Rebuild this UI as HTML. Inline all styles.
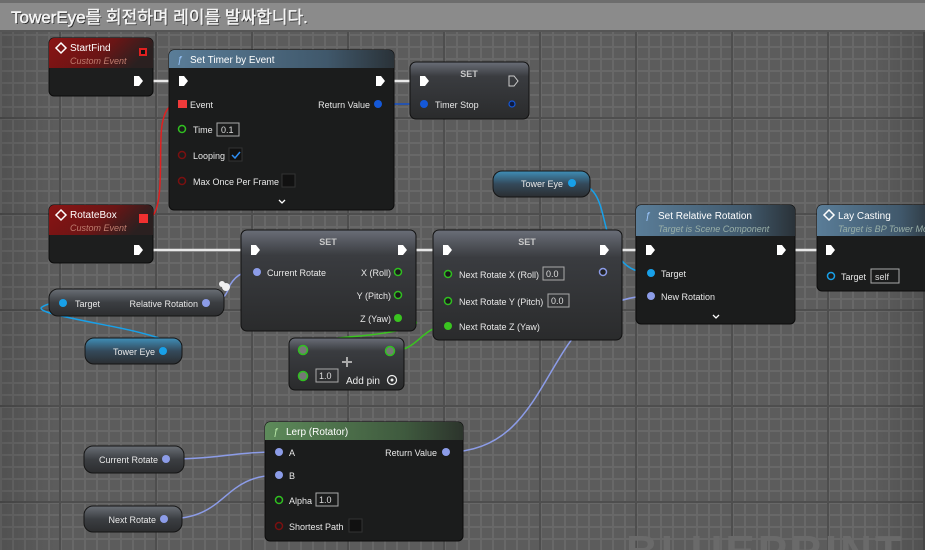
<!DOCTYPE html>
<html><head><meta charset="utf-8"><style>
html,body{margin:0;padding:0;width:925px;height:550px;overflow:hidden}
body{background-color:#5c5c5c;
background-image:
linear-gradient(90deg,#4e4e4e 0 2px,transparent 2px),
linear-gradient(0deg,#4e4e4e 0 2px,transparent 2px),
linear-gradient(90deg,#686868 0 2px,transparent 2px),
linear-gradient(0deg,#686868 0 2px,transparent 2px);
background-size:96px 96px,96px 96px,12px 12px,12px 12px;
background-position:59px 0,0 23px,0 0,0 0;
font-family:"Liberation Sans","Noto Sans CJK KR",sans-serif}
svg{position:absolute;left:0;top:0;display:block;overflow:hidden}
text{font-family:"Liberation Sans","Noto Sans CJK KR",sans-serif}
</style></head><body>
<svg width="925" height="550" viewBox="0 0 925 550">
<defs>
<linearGradient id="red" x1="0" y1="0" x2="1" y2="0.3"><stop offset="0" stop-color="#8a1414"/><stop offset=".6" stop-color="#6a1515"/><stop offset="1" stop-color="#2a2020"/></linearGradient>
<linearGradient id="blue" x1="0" y1="0" x2="1" y2="0"><stop offset="0" stop-color="#5a7d98"/><stop offset=".7" stop-color="#40586b"/><stop offset="1" stop-color="#2a3238"/></linearGradient>
<linearGradient id="green" x1="0" y1="0" x2="1" y2="0"><stop offset="0" stop-color="#5d8a5a"/><stop offset=".7" stop-color="#3f5a3e"/><stop offset="1" stop-color="#2c342c"/></linearGradient>
<linearGradient id="setg" x1="0" y1="0" x2="0" y2="1"><stop offset="0" stop-color="#6a6e78"/><stop offset=".25" stop-color="#3a3c40"/><stop offset="1" stop-color="#2a2b2c"/></linearGradient>
<linearGradient id="varg" x1="0" y1="0" x2="0" y2="1"><stop offset="0" stop-color="#6a6f76"/><stop offset=".5" stop-color="#3b3e42"/><stop offset="1" stop-color="#2c2d2f"/></linearGradient>
<linearGradient id="varb" x1="0" y1="0" x2="0" y2="1"><stop offset="0" stop-color="#3f8fb8"/><stop offset=".5" stop-color="#34495a"/><stop offset="1" stop-color="#2b2e31"/></linearGradient>
<linearGradient id="vig" x1="0" y1="0" x2="1" y2="0"><stop offset="0" stop-color="#000" stop-opacity=".12"/><stop offset=".06" stop-color="#000" stop-opacity="0"/><stop offset=".94" stop-color="#000" stop-opacity="0"/><stop offset="1" stop-color="#000" stop-opacity=".12"/></linearGradient>
</defs>
<rect x="0" y="0" width="925" height="550" fill="url(#vig)"/>

<!-- comment bar -->
<rect x="0" y="0" width="925" height="31" fill="#8b8b8b"/>
<rect x="0" y="0" width="925" height="3" fill="#6d6d6d"/>
<rect x="0" y="30" width="925" height="2" fill="#555"/>
<text x="11" y="23" font-size="17" fill="#2a2a2a" transform="translate(1,1)">TowerEye를 회전하며 레이를 발싸합니다.</text>
<text x="11" y="23" font-size="17" fill="#f4f4f4" stroke="#f4f4f4" stroke-width=".5">TowerEye를 회전하며 레이를 발싸합니다.</text>

<text x="626" y="566" font-size="44" font-weight="bold" fill="#6a6a6a" letter-spacing="3">BLUEPRINT</text>

<!-- wires -->
<g fill="none" stroke-linecap="round">
<path d="M153,81 H177" stroke="#e8e8e8" stroke-width="2.5"/>
<path d="M386,81 H420" stroke="#e8e8e8" stroke-width="2.5"/>
<path d="M153,250 H250" stroke="#e8e8e8" stroke-width="2.5"/>
<path d="M408,250 H442" stroke="#e8e8e8" stroke-width="2.5"/>
<path d="M612,250 H645" stroke="#e8e8e8" stroke-width="2.5"/>
<path d="M786,250 H826" stroke="#e8e8e8" stroke-width="2.5"/>
<path d="M380,104 H424" stroke="#1550c8" stroke-width="1.5"/>
<path d="M148,219 C166,214 158,150 162,125 C165,108 170,104 180,104" stroke="#e02020" stroke-width="1.5"/>
<path d="M573,183 C605,183 600,220 612,245 C620,262 630,273 651,273" stroke="#18a0e8" stroke-width="1.5"/>
<path d="M164,351 C200,355 178,340 120,328 C70,318 35,312 42,307 C48,303 55,303 63,303" stroke="#18a0e8" stroke-width="1.5"/>
<path d="M208,303 C225,303 228,290 230,285 C238,272 245,272 258,272" stroke="#8c9ce8" stroke-width="1.5"/>
<path d="M400,318 C430,320 420,330 360,336 C300,341 272,349 303,350" stroke="#3ac420" stroke-width="1.5"/>
<path d="M391,351 C420,351 420,326 448,326" stroke="#3ac420" stroke-width="1.5"/>
<path d="M448,452 C560,452 540,296 651,296" stroke="#8c9ce8" stroke-width="1.5"/>
<path d="M168,459 C220,459 230,452 280,452" stroke="#8c9ce8" stroke-width="1.5"/>
<path d="M166,519 C230,519 220,475 280,475" stroke="#8c9ce8" stroke-width="1.5"/>
</g>
<circle cx="226" cy="287" r="4" fill="#f0f0f0"/><circle cx="222" cy="284" r="3" fill="#f0f0f0"/>

<!-- StartFind -->
<rect x="49" y="38" width="104" height="58" rx="5" fill="#1d1e1e" stroke="#0c0c0c"/>
<path d="M54,38 H148 a5,5 0 0 1 5,5 V68 H49 V43 a5,5 0 0 1 5,-5z" fill="url(#red)"/>
<path d="M61,43 l5,5 -5,5 -5,-5z" fill="none" stroke="#fff" stroke-width="1.5"/>
<text x="70" y="51" font-size="10" fill="#fff">StartFind</text>
<text x="70" y="64" font-size="9" fill="#c07e70" font-style="italic">Custom Event</text>
<rect x="139" y="48" width="8" height="8" fill="#e02020"/><rect x="141" y="50" width="4" height="4" fill="#111"/>
<polygon points="134,76 139,76 143,81 139,86 134,86" fill="#fff"/>

<!-- RotateBox -->
<rect x="49" y="205" width="104" height="58" rx="5" fill="#1d1e1e" stroke="#0c0c0c"/>
<path d="M54,205 H148 a5,5 0 0 1 5,5 V235 H49 V210 a5,5 0 0 1 5,-5z" fill="url(#red)"/>
<path d="M61,210 l5,5 -5,5 -5,-5z" fill="none" stroke="#fff" stroke-width="1.5"/>
<text x="70" y="218" font-size="10" fill="#fff">RotateBox</text>
<text x="70" y="231" font-size="9" fill="#c07e70" font-style="italic">Custom Event</text>
<rect x="139" y="214" width="9" height="9" fill="#f03030"/>
<polygon points="134,245 139,245 143,250 139,255 134,255" fill="#fff"/>

<!-- Set Timer by Event -->
<rect x="169" y="50" width="225" height="160" rx="5" fill="#1b1c1c" stroke="#0c0c0c"/>
<path d="M174,50 H389 a5,5 0 0 1 5,5 V68 H169 V55 a5,5 0 0 1 5,-5z" fill="url(#blue)"/>
<text x="177" y="63" font-size="10" fill="#9cc8ff" font-style="italic">ƒ</text>
<text x="190" y="63" font-size="10" fill="#fff">Set Timer by Event</text>
<polygon points="179,76 184,76 188,81 184,86 179,86" fill="#fff"/>
<polygon points="376,76 381,76 385,81 381,86 376,86" fill="#fff"/>
<rect x="178" y="100" width="9" height="8" fill="#f03a3a"/>
<text x="190" y="108" font-size="9" fill="#e8e8e8">Event</text>
<text x="370" y="108" font-size="9" fill="#e8e8e8" text-anchor="end">Return Value</text>
<circle cx="378" cy="104" r="4" fill="#1458d8"/>
<circle cx="182" cy="129" r="3.5" fill="none" stroke="#30c020" stroke-width="1.5"/>
<text x="193" y="133" font-size="9" fill="#e8e8e8">Time</text>
<rect x="217" y="123" width="22" height="13" fill="none" stroke="#aaa"/>
<text x="221" y="133" font-size="9" fill="#ddd">0.1</text>
<circle cx="182" cy="155" r="3.5" fill="none" stroke="#7a1010" stroke-width="1.5"/>
<text x="193" y="159" font-size="9" fill="#e8e8e8">Looping</text>
<rect x="229" y="148" width="13" height="13" fill="#111" stroke="#333"/>
<path d="M232,155 l3,3 5,-6" fill="none" stroke="#2d8cf0" stroke-width="1.5"/>
<circle cx="182" cy="181" r="3.5" fill="none" stroke="#7a1010" stroke-width="1.5"/>
<text x="193" y="185" font-size="9" fill="#e8e8e8">Max Once Per Frame</text>
<rect x="282" y="174" width="13" height="13" fill="#111" stroke="#333"/>
<path d="M279,200 l3,3 3,-3" fill="none" stroke="#fff" stroke-width="1.3"/>

<!-- SET timer -->
<rect x="410" y="62" width="119" height="57" rx="6" fill="url(#setg)" stroke="#111"/>
<text x="469" y="77" font-size="9" fill="#c8c8c8" text-anchor="middle" font-weight="bold">SET</text>
<polygon points="420,76 425,76 429,81 425,86 420,86" fill="#fff"/>
<polygon points="509,76 514,76 518,81 514,86 509,86" fill="none" stroke="#ccc"/>
<circle cx="424" cy="104" r="4" fill="#1458d8"/>
<text x="435" y="108" font-size="9" fill="#e8e8e8">Timer Stop</text>
<circle cx="512" cy="104" r="3" fill="#0e1a40" stroke="#1458d8" stroke-width="1.2"/>

<!-- Tower Eye var top -->
<rect x="493" y="171" width="97" height="26" rx="9" fill="url(#varb)" stroke="#151515"/>
<text x="563" y="187" font-size="9" fill="#e8e8e8" text-anchor="end">Tower Eye</text>
<circle cx="572" cy="183" r="4" fill="#18a0e8"/>

<!-- SET 1 -->
<rect x="241" y="230" width="175" height="101" rx="6" fill="url(#setg)" stroke="#111"/>
<text x="328" y="245" font-size="9" fill="#c8c8c8" text-anchor="middle" font-weight="bold">SET</text>
<polygon points="251,245 256,245 260,250 256,255 251,255" fill="#fff"/>
<polygon points="398,245 403,245 407,250 403,255 398,255" fill="#fff"/>
<circle cx="257" cy="272" r="4" fill="#8c9ce8"/>
<text x="267" y="276" font-size="9" fill="#e8e8e8">Current Rotate</text>
<text x="391" y="276" font-size="9" fill="#e8e8e8" text-anchor="end">X (Roll)</text>
<circle cx="398" cy="272" r="3.5" fill="#1a1a1a" stroke="#30c020" stroke-width="1.5"/>
<text x="391" y="299" font-size="9" fill="#e8e8e8" text-anchor="end">Y (Pitch)</text>
<circle cx="398" cy="295" r="3.5" fill="#1a1a1a" stroke="#30c020" stroke-width="1.5"/>
<text x="391" y="322" font-size="9" fill="#e8e8e8" text-anchor="end">Z (Yaw)</text>
<circle cx="398" cy="318" r="4" fill="#3ac420"/>

<!-- SET 2 -->
<rect x="433" y="230" width="189" height="110" rx="6" fill="url(#setg)" stroke="#111"/>
<text x="527" y="245" font-size="9" fill="#c8c8c8" text-anchor="middle" font-weight="bold">SET</text>
<polygon points="443,245 448,245 452,250 448,255 443,255" fill="#fff"/>
<polygon points="600,245 605,245 609,250 605,255 600,255" fill="#fff"/>
<circle cx="448" cy="274" r="3.5" fill="#1a1a1a" stroke="#30c020" stroke-width="1.5"/>
<text x="459" y="278" font-size="9" fill="#e8e8e8">Next Rotate X (Roll)</text>
<rect x="543" y="267" width="21" height="13" fill="none" stroke="#aaa"/><text x="546" y="277" font-size="9" fill="#ddd">0.0</text>
<circle cx="448" cy="301" r="3.5" fill="#1a1a1a" stroke="#30c020" stroke-width="1.5"/>
<text x="459" y="305" font-size="9" fill="#e8e8e8">Next Rotate Y (Pitch)</text>
<rect x="548" y="294" width="21" height="13" fill="none" stroke="#aaa"/><text x="551" y="304" font-size="9" fill="#ddd">0.0</text>
<circle cx="448" cy="326" r="4" fill="#3ac420"/>
<text x="459" y="330" font-size="9" fill="#e8e8e8">Next Rotate Z (Yaw)</text>
<circle cx="603" cy="272" r="3.5" fill="#222" stroke="#8c9ce8" stroke-width="1.5"/>

<!-- Set Relative Rotation -->
<rect x="636" y="205" width="159" height="119" rx="5" fill="#1b1c1c" stroke="#0c0c0c"/>
<path d="M641,205 H790 a5,5 0 0 1 5,5 V236 H636 V210 a5,5 0 0 1 5,-5z" fill="url(#blue)"/>
<text x="645" y="219" font-size="10" fill="#9cc8ff" font-style="italic">ƒ</text>
<text x="658" y="219" font-size="10" fill="#fff">Set Relative Rotation</text>
<text x="658" y="232" font-size="9" fill="#9ab0a8" font-style="italic">Target is Scene Component</text>
<polygon points="646,245 651,245 655,250 651,255 646,255" fill="#fff"/>
<polygon points="777,245 782,245 786,250 782,255 777,255" fill="#fff"/>
<circle cx="651" cy="273" r="4" fill="#18a0e8"/>
<text x="661" y="277" font-size="9" fill="#e8e8e8">Target</text>
<circle cx="651" cy="296" r="4" fill="#8c9ce8"/>
<text x="661" y="300" font-size="9" fill="#e8e8e8">New Rotation</text>
<path d="M713,315 l3,3 3,-3" fill="none" stroke="#fff" stroke-width="1.3"/>

<!-- Lay Casting -->
<rect x="817" y="205" width="120" height="86" rx="5" fill="#1b1c1c" stroke="#0c0c0c"/>
<path d="M822,205 H937 V236 H817 V210 a5,5 0 0 1 5,-5z" fill="url(#blue)"/>
<path d="M829,210 l5,5 -5,5 -5,-5z" fill="none" stroke="#fff" stroke-width="1.5"/>
<text x="838" y="219" font-size="10" fill="#fff">Lay Casting</text>
<text x="838" y="232" font-size="9" fill="#9ab0a8" font-style="italic">Target is BP Tower Mo</text>
<polygon points="826,245 831,245 835,250 831,255 826,255" fill="#fff"/>
<circle cx="831" cy="276" r="3.5" fill="none" stroke="#18a0e8" stroke-width="1.5"/>
<text x="841" y="280" font-size="9" fill="#e8e8e8">Target</text>
<rect x="871" y="269" width="28" height="14" fill="none" stroke="#aaa"/><text x="875" y="280" font-size="9" fill="#ddd">self</text>

<!-- Target / Relative Rotation var -->
<rect x="49" y="289" width="175" height="27" rx="9" fill="url(#varg)" stroke="#151515"/>
<circle cx="63" cy="303" r="4" fill="#18a0e8"/>
<text x="75" y="307" font-size="9" fill="#e8e8e8">Target</text>
<text x="198" y="307" font-size="9" fill="#e8e8e8" text-anchor="end">Relative Rotation</text>
<circle cx="206" cy="303" r="4" fill="#8c9ce8"/>

<!-- Tower Eye var 2 -->
<rect x="85" y="338" width="97" height="26" rx="9" fill="url(#varb)" stroke="#151515"/>
<text x="155" y="355" font-size="9" fill="#e8e8e8" text-anchor="end">Tower Eye</text>
<circle cx="163" cy="351" r="4" fill="#18a0e8"/>

<!-- Add node -->
<rect x="289" y="338" width="115" height="52" rx="6" fill="url(#setg)" stroke="#111"/>
<circle cx="303" cy="350" r="4.5" fill="#777" stroke="#30c020" stroke-width="1.5"/>
<circle cx="390" cy="351" r="4.5" fill="#777" stroke="#30c020" stroke-width="1.5"/>
<circle cx="303" cy="376" r="4.5" fill="#777" stroke="#30c020" stroke-width="1.5"/>
<rect x="316" y="369" width="22" height="13" fill="none" stroke="#aaa"/><text x="319" y="379" font-size="9" fill="#ddd">1.0</text>
<path d="M347,357 v10 M342,362 h10" stroke="#aaa" stroke-width="2"/>
<text x="346" y="384" font-size="10" fill="#eee">Add pin</text>
<circle cx="392" cy="380" r="4.5" fill="none" stroke="#eee" stroke-width="1.2"/><circle cx="392" cy="380" r="1.5" fill="#eee"/>

<!-- Lerp -->
<rect x="265" y="422" width="198" height="119" rx="5" fill="#1b1c1c" stroke="#0c0c0c"/>
<path d="M270,422 H458 a5,5 0 0 1 5,5 V440 H265 V427 a5,5 0 0 1 5,-5z" fill="url(#green)"/>
<text x="273" y="435" font-size="10" fill="#b8e8a8" font-style="italic">ƒ</text>
<text x="286" y="435" font-size="10" fill="#fff">Lerp (Rotator)</text>
<circle cx="279" cy="452" r="4" fill="#8c9ce8"/>
<text x="289" y="456" font-size="9" fill="#e8e8e8">A</text>
<text x="437" y="456" font-size="9" fill="#e8e8e8" text-anchor="end">Return Value</text>
<circle cx="446" cy="452" r="4" fill="#8c9ce8"/>
<circle cx="279" cy="475" r="4" fill="#8c9ce8"/>
<text x="289" y="479" font-size="9" fill="#e8e8e8">B</text>
<circle cx="279" cy="500" r="3.5" fill="none" stroke="#30c020" stroke-width="1.5"/>
<text x="289" y="504" font-size="9" fill="#e8e8e8">Alpha</text>
<rect x="316" y="493" width="22" height="13" fill="none" stroke="#aaa"/><text x="319" y="503" font-size="9" fill="#ddd">1.0</text>
<circle cx="279" cy="526" r="3.5" fill="none" stroke="#7a1010" stroke-width="1.5"/>
<text x="289" y="530" font-size="9" fill="#e8e8e8">Shortest Path</text>
<rect x="349" y="519" width="13" height="13" fill="#111" stroke="#333"/>

<!-- Current Rotate / Next Rotate vars -->
<rect x="84" y="446" width="100" height="27" rx="9" fill="url(#varg)" stroke="#151515"/>
<text x="158" y="463" font-size="9" fill="#e8e8e8" text-anchor="end">Current Rotate</text>
<circle cx="166" cy="459" r="4" fill="#8c9ce8"/>
<rect x="84" y="506" width="98" height="26" rx="9" fill="url(#varg)" stroke="#151515"/>
<text x="156" y="523" font-size="9" fill="#e8e8e8" text-anchor="end">Next Rotate</text>
<circle cx="164" cy="519" r="4" fill="#8c9ce8"/>
</svg>
</body></html>
